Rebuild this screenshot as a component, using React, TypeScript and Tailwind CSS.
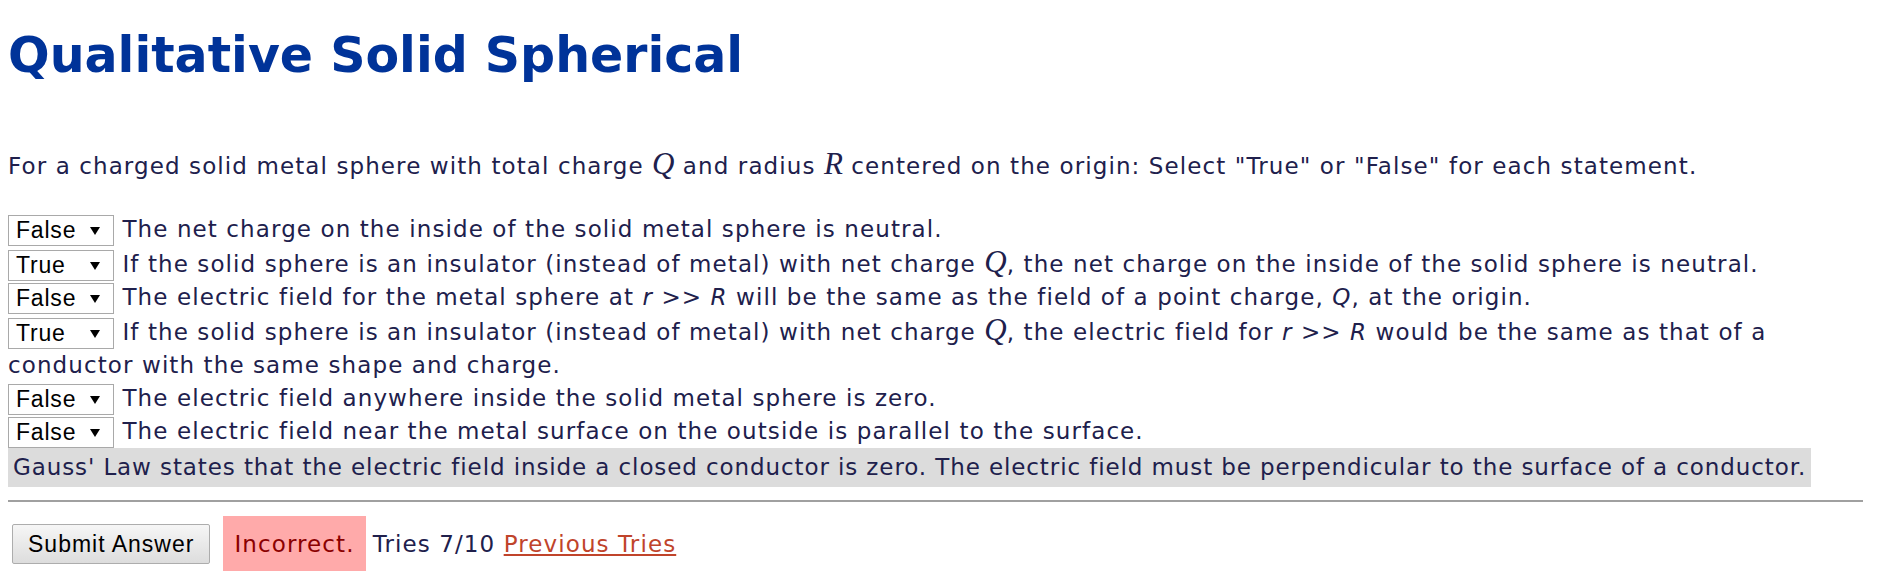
import React from "react"

const rows: { value: string; text: React.ReactNode }[] = [
  { value: "False", text: "The net charge on the inside of the solid metal sphere is neutral." },
  {
    value: "True",
    text: (
      <>
        If the solid sphere is an insulator (instead of metal) with net charge <MathVar>Q</MathVar>, the net charge on the
        inside of the solid sphere is neutral.
      </>
    ),
  },
  {
    value: "False",
    text: (
      <>
        The electric field for the metal sphere at <i>r</i> &gt;&gt; <i>R</i> will be the same as the field of a point
        charge, <i>Q</i>, at the origin.
      </>
    ),
  },
  {
    value: "True",
    text: (
      <>
        If the solid sphere is an insulator (instead of metal) with net charge <MathVar>Q</MathVar>, the electric field for{" "}
        <i>r</i> &gt;&gt; <i>R</i> would be the same as that of a conductor with the same shape and charge.
      </>
    ),
  },
  { value: "False", text: "The electric field anywhere inside the solid metal sphere is zero." },
  { value: "False", text: "The electric field near the metal surface on the outside is parallel to the surface." },
]

function MathVar({ children }: { children: React.ReactNode }) {
  return <span className="font-['Liberation_Serif',serif] text-[31px] leading-none italic tracking-normal">{children}</span>
}

function FakeSelect({ value }: { value: string }) {
  return (
    <span className="inline-flex h-[31px] w-[106px] items-center justify-between border border-[#a9a9a9] bg-white pr-[13px] pl-[7px] align-middle font-['Liberation_Sans',sans-serif] text-[23px] leading-none tracking-[0.8px] text-black">
      <span>{value}</span>
      <svg width="10" height="8" viewBox="0 0 10 8" className="mt-[1px]">
        <polygon points="0,0 10,0 5,8" fill="#000" />
      </svg>
    </span>
  )
}

export default function App() {
  return (
    <div className="bg-white px-2 font-['DejaVu_Sans',sans-serif] text-[23px] tracking-[1.1px] text-[#20204c]">
      <h1 className="pt-[28px] text-[49px] leading-[1.15] font-bold tracking-normal text-[#003399]">
        Qualitative Solid Spherical
      </h1>

      <p className="mt-[64px] leading-[33px]">
        For a charged solid metal sphere with total charge <MathVar>Q</MathVar> and radius <MathVar>R</MathVar> centered on
        the origin: Select "True" or "False" for each statement.
      </p>

      <div className="mt-[30px] leading-[33px]">
        {rows.map((row, i) => (
          <div key={i}>
            <FakeSelect value={row.value} /> {row.text}
          </div>
        ))}
      </div>

      <div className="inline-block bg-[#dcdcdc] px-[5px] py-[2px] leading-[35px] tracking-[0.9px]">
        Gauss' Law states that the electric field inside a closed conductor is zero. The electric field must be
        perpendicular to the surface of a conductor.
      </div>

      <hr className="mt-[13px] mr-[7px] border-t-2 border-[#a0a0a0]" />

      <div className="mt-[14px] ml-[4px] flex items-center gap-[13px]">
        <button className="h-[40px] rounded-[2px] border border-[#adadad] bg-gradient-to-b from-[#f6f6f6] to-[#dddddd] px-[15px] font-['Liberation_Sans',sans-serif] text-[23px] tracking-[1px] text-black">
          Submit Answer
        </button>
        <span className="flex h-[55px] items-center bg-[#ffaaaa] px-[11px] text-[#8b0000]">Incorrect.</span>
        <span className="-ml-[6px]">
          Tries 7/10{" "}
          <a href="#" className="text-[#c0442b] underline">
            Previous Tries
          </a>
        </span>
      </div>
    </div>
  )
}
